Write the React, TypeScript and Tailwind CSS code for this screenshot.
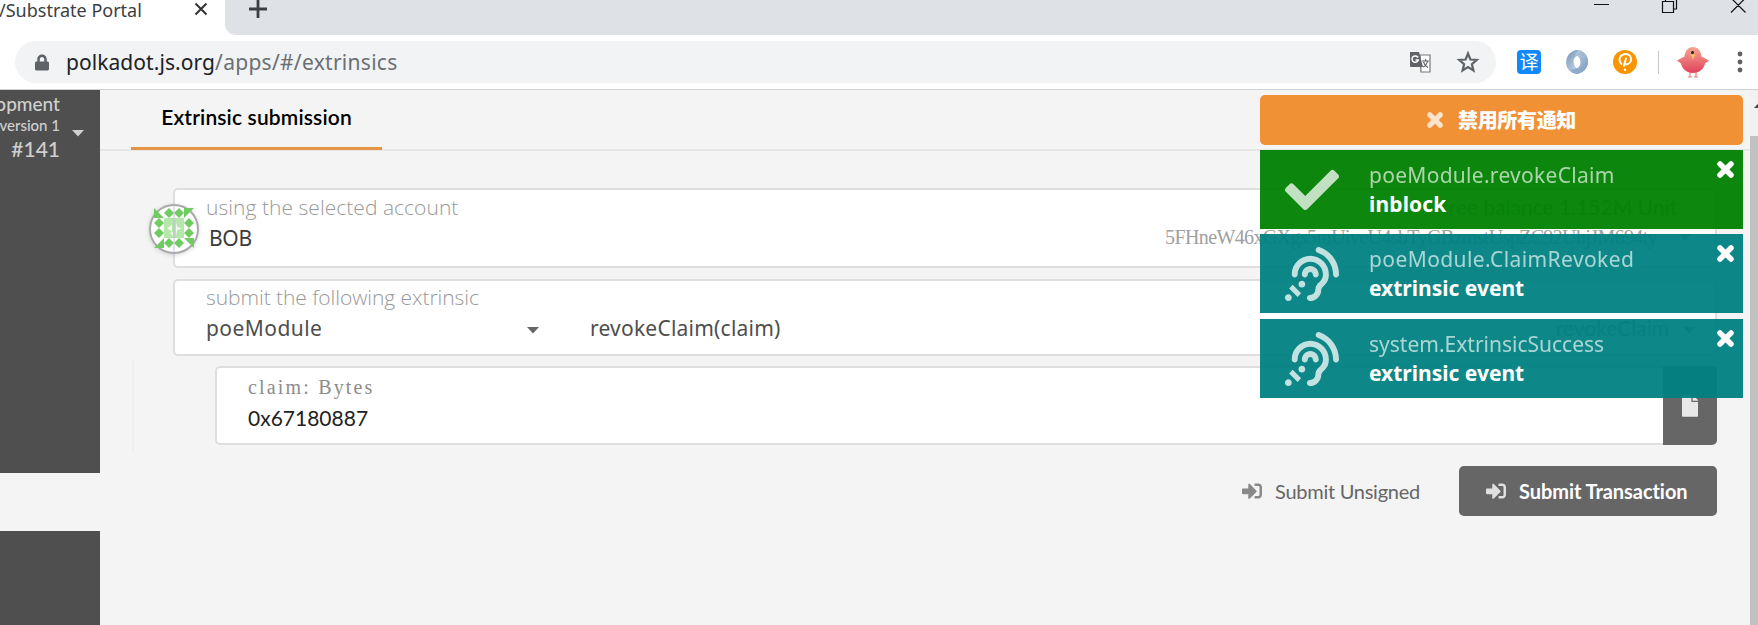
import { FaCheck, FaAssistiveListeningSystems, FaSignInAlt, FaFile, FaLock } from "react-icons/fa";

const ui = "font-['Noto_Sans','Noto_Sans_CJK_SC',sans-serif]";
const lato = "font-[Lato,sans-serif]";

function T({ w, className, children }: { w: number; className: string; children: string }) {
  return (
    <span
      className={"inline-block whitespace-pre origin-left " + className}
      ref={(el) => {
        if (el) el.style.letterSpacing = "0px";
        if (el) el.style.letterSpacing = (w - el.offsetWidth) / children.length + "px";
      }}
    >
      {children}
    </span>
  );
}

function Identicon() {
  const diamonds = [
    [19, 9], [29, 9], [19, 39], [29, 39],
    [9, 19], [9, 29], [39, 19], [39, 29],
  ];
  return (
    <svg width="52" height="52" viewBox="0 0 52 52" className="drop-shadow-sm">
      <circle cx="26" cy="26" r="24" fill="#fff" stroke="#aaa" strokeWidth="2" />
      <g transform="translate(2 1)" fill="#70cc62">
        {diamonds.map(([x, y]) => (
          <path key={x + "-" + y} d={`M${x} ${y - 5}l5 5-5 5-5-5z`} />
        ))}
        <path d="M4 4v10h10zM44 4H34v10zM4 44h10V34zM44 44V34H34z" />
        <path d="M14 14h20v20H14z" fill="#b5e6ac" />
        <path d="M26 18l1.500 5 4.500 1.500-4.500 1.500L26 31zM17 24.500l5-4v7zM20 29l3-1v4z" fill="#eefaec" />
      </g>
      <path d="M26 2v48" stroke="#c9b5d8" strokeWidth="1.500" opacity=".6" />
    </svg>
  );
}

function Browser() {
  return (
    <header className={"flex h-[90px] shrink-0 flex-col border-b border-[#cfd1d4] bg-white " + ui}>
      <div className="flex h-[35px]">
        <div className="flex w-[225px] items-start overflow-hidden text-[#3c4043]">
          <div className="-mt-[3px] w-[194px] whitespace-nowrap text-[18px] leading-[26px]"><T w={143} className="-ml-px">/Substrate Portal</T></div>
          <svg width="14" height="14" viewBox="0 0 14 14" className="mt-[2px] shrink-0" stroke="#333" strokeWidth="2"><path d="M1.500 1.500l11 11M12.500 1.500l-11 11" /></svg>
        </div>
        <div className="flex flex-1 items-start rounded-bl-[11px] bg-[#dee1e6]">
          <svg width="20" height="20" viewBox="0 0 20 20" className="-mt-[1px] ml-[23px]" stroke="#3c4043" strokeWidth="2.800"><path d="M10 1v18M1 10h18" /></svg>
          <div className="flex-1" />
          <svg width="166" height="16" viewBox="-6 0 166 16" fill="none" stroke="#111" strokeWidth="1.200">
            <path d="M-4 4.500h15M64.500 1.500h11v11h-11zM67.500 1V-2h11v11h-3M133 -2l14.500 14.500M147.500 -2L133 12.500" />
          </svg>
        </div>
      </div>
      <div className="flex h-[54px] items-center pl-[15px]">
        <div className="flex h-[42px] w-[1481px] items-center rounded-full bg-[#f1f3f4] pl-[20px]">
          <FaLock className="h-[17px] w-[14px] text-[#5f6368]" />
          <div className="ml-[17px] flex flex-1 items-center text-[21px] leading-none text-[#202124]">
            <T w={149} className="">polkadot.js.org</T>
            <T w={182} className="text-[#6b6f74]">/apps/#/extrinsics</T>
          </div>
          <svg width="22" height="22" viewBox="0 0 22 22">
            <path d="M11 4h10v17h-9z" fill="#fff" stroke="#777" strokeWidth="1.200" />
            <path d="M1 1h9l4 15H2a1 1 0 0 1-1-1z" fill="#5f6368" />
            <path d="M9 6.500A3.200 3.200 0 1 0 9.300 9H6.500" fill="none" stroke="#fff" strokeWidth="1.500" />
            <path d="M13 10h7M16.500 8v2M18.500 10c-.5 3-2 5-4.500 6M14.500 11c1 3 2.500 4.500 4.500 5.500" fill="none" stroke="#5f6368" strokeWidth="1.200" />
          </svg>
          <svg width="24" height="24" viewBox="0 0 24 24" className="ml-[25px] mr-[16px]"><path d="M12 3.500l2.400 6 6.400.5-4.900 4.200 1.500 6.300-5.400-3.400-5.400 3.400 1.500-6.300L3.200 10l6.400-.5z" fill="none" stroke="#5f6368" strokeWidth="2.200" /></svg>
        </div>
        <div className="ml-[21px] flex size-6 items-center justify-center rounded-[4px] bg-[#1189fa] text-[19px] leading-none text-white">译</div>
        <svg width="24" height="24" viewBox="0 0 24 24" className="ml-[24px]">
          <defs>
            <linearGradient id="ring" x1="0" y1="0" x2="1" y2="1"><stop offset="0" stopColor="#6f90b2" /><stop offset=".5" stopColor="#a9c0d8" /><stop offset="1" stopColor="#d5e2ee" /></linearGradient>
            <linearGradient id="ring2" x1="0" y1="0" x2="1" y2="1"><stop offset="0" stopColor="#d5e2ee" /><stop offset=".5" stopColor="#8eaccb" /><stop offset="1" stopColor="#5d83aa" /></linearGradient>
          </defs>
          <path d="M12 6C6.500 8.500 8 16.500 14 20c-2 2-4 3-6 3C-2 19-1 3 11 0c5 0 8 2 8 6-2-1.500-5-1.500-7 0z" fill="url(#ring)" />
          <path d="M12 18c5.500-2.500 4-10.500-2-14 2-2 4-3.500 6-3.500 10 4.500 10 19.500-3 23.500-5 0-8-2-8-6 2 1.500 5 1.500 7 0z" fill="url(#ring2)" opacity=".85" />
          <ellipse cx="12" cy="12" rx="3.200" ry="5.500" fill="#fff" />
        </svg>
        <svg width="24" height="24" viewBox="0 0 24 24" className="ml-[24px]">
          <circle cx="12" cy="12" r="12" fill="#fc9300" />
          <path d="M8.500 14C4 9 8 4 12.500 4c7.500 0 7.500 10.500-.5 10.500M13 8.500L10.800 16" fill="none" stroke="#fff" strokeWidth="1.900" strokeLinecap="round" />
          <circle cx="12" cy="19.800" r="1.200" fill="#fff" />
        </svg>
        <div className="ml-[21px] h-[23px] w-px bg-[#c6c9cc]" />
        <svg width="34" height="34" viewBox="0 0 34 34" className="ml-[17px]">
          <defs><linearGradient id="bird" x1="0" y1="0" x2="0" y2="1"><stop offset="0" stopColor="#f4a890" /><stop offset="1" stopColor="#e3405c" /></linearGradient></defs>
          <path d="M14 27v5m-2 0h4M20 27v5m-2 0h4" stroke="#e98074" strokeWidth="1.200" fill="none" />
          <path d="M17 2c-5 0-8 4-8.500 9.500L1 15.500l4 3C6 24 11 28 17 28s11-4 12-9.500l4-3-7.500-4C25 6 22 2 17 2z" fill="url(#bird)" />
          <path d="M14.500 9.500h5l-2.500 5z" fill="#f8c36a" /><circle cx="16.500" cy="7.500" r="1.500" fill="#222" />
        </svg>
        <svg width="6" height="22" viewBox="0 0 6 22" className="ml-[27px]" fill="#5f6368"><circle cx="3" cy="3" r="2.400" /><circle cx="3" cy="11" r="2.400" /><circle cx="3" cy="19" r="2.400" /></svg>
      </div>
    </header>
  );
}

function Caret({ className }: { className: string }) {
  return <svg width="12" height="7" viewBox="0 0 12 7" className={className} fill="currentColor"><path d="M0 0h12L6 6.500z" /></svg>;
}

function Toast({ title, status, ok }: { title: [string, number]; status: [string, number]; ok?: boolean }) {
  return (
    <div className={"relative flex h-[79px] items-center text-white " + (ok ? "bg-[#008000]/95" : "bg-[#008080]/95")}>
      <div className="flex w-[109px] pl-[25px] opacity-75">
        {ok ? <FaCheck className="size-[54px]" /> : <FaAssistiveListeningSystems className="size-[54px]" />}
      </div>
      <div className="flex flex-col items-start">
        <div className="h-[29px] text-[21px] leading-[29px] opacity-65"><T w={title[1]} className="">{title[0]}</T></div>
        <div className="h-[29px] text-[21px] font-bold leading-[29px]"><T w={status[1]} className="">{status[0]}</T></div>
      </div>
      <CloseMark className="absolute right-[9px] top-[11px] size-[17px]" />
    </div>
  );
}

function CloseMark({ className }: { className: string }) {
  return <svg viewBox="0 0 17 17" className={className} stroke="currentColor" strokeWidth="5.500" strokeLinecap="round"><path d="M3 3l11 11M14 3L3 14" /></svg>;
}

export default function App() {
  return (
    <div className={"relative flex h-[625px] w-[1758px] flex-col overflow-hidden bg-[#f4f4f4] text-[#4e4e4e] " + ui}>
      <Browser />
      <div className="flex flex-1">
        <aside className={"flex w-[100px] shrink-0 flex-col " + lato}>
          <div className="flex h-[383px] bg-[#4f4f4f] text-[#d0d0d0]">
            <div className="flex w-[60px] flex-col items-end overflow-hidden whitespace-nowrap pt-[2px] font-medium">
              <div className="text-[19px] leading-[24px]">opment</div>
              <div className="text-[15px] leading-[18px]">version 1</div>
              <div className="text-[21px] leading-[30px]"><T w={49} className="">#141</T></div>
            </div>
            <Caret className="ml-[12px] mt-[40px]" />
          </div>
          <div className="h-[58px]" />
          <div className="flex-1 bg-[#4f4f4f]" />
        </aside>
        <main className="flex w-[1650px] flex-col">
          <div className="flex h-[61px] items-end border-b-2 border-[#e6e6e6] pl-[31px]">
            <div className={"-mb-px flex h-[60px] w-[251px] justify-center border-b-[3px] border-[#e39545] pt-[11px] text-[21px] font-semibold leading-[32px] text-black " + lato}>
              <T w={191} className="">Extrinsic submission</T>
            </div>
          </div>
          <section className="ml-[73px] mt-[37px] flex h-[80px] w-[1544px] rounded-[5px] border-2 border-[#dedede] bg-white">
            <div className="-ml-[27px] mt-[13px] w-[52px]"><Identicon /></div>
            <div className="ml-[6px] flex w-[860px] flex-col items-start pt-px">
              <div className="h-[32px] text-[21px] font-light leading-[32px] text-[#999]"><T w={252} className="font-['Open_Sans']">using the selected account</T></div>
              <div className="ml-[3px] h-[31px] text-[21px] leading-[31px] text-[#3c3c3c]"><T w={43} className="">BOB</T></div>
            </div>
            <div className="flex flex-1 flex-col pr-[24px]">
              <div className={"mt-[3px] flex justify-end pr-[14px] text-[21px] leading-[28px] text-[#a0a0a0] " + lato}>free balance 1.152M Unit</div>
              <div className="flex items-center whitespace-nowrap pl-[111px] font-['Liberation_Serif',serif] text-[20px] leading-[32px] text-[#a0a0a0]">
                <T w={492} className="">5FHneW46xGXgs5mUiveU4sbTyGBzmstUspZC92UhjJM694ty</T><Caret className="ml-[22px] text-[#888]" />
              </div>
            </div>
          </section>
          <section className="ml-[73px] mt-[11px] flex h-[77px] w-[1544px] rounded-[5px] border-2 border-[#dedede] bg-white">
            <div className="flex w-[352px] flex-col items-start pl-[31px] pt-px">
              <div className="h-[30px] text-[21px] font-light leading-[30px] text-[#999]"><T w={273} className="font-['Open_Sans']">submit the following extrinsic</T></div>
              <div className="mt-px h-[30px] text-[21px] leading-[30px]"><T w={116} className="">poeModule</T></div>
            </div>
            <Caret className="mt-[46px] text-[#666]" />
            <div className="ml-[51px] mt-[32px] text-[21px] leading-[30px]"><T w={191} className="">revokeClaim(claim)</T></div>
            <div className="flex-1" />
            <div className={"mr-[14px] mt-[32px] text-[21px] leading-[29px] text-[#888] " + lato}>revokeClaim</div>
            <Caret className="mr-[20px] mt-[46px] text-[#888]" />
          </section>
          <div className="ml-[32px] mt-[3px] flex h-[93px] items-start border-l-2 border-[#efefef] pt-[7px]">
            <section className="ml-[81px] flex h-[79px] w-[1502px]">
              <div className="flex flex-1 flex-col items-start rounded-l-[5px] border-2 border-r-0 border-[#dedede] bg-white pl-[31px] pt-[4px]">
                <div className="h-[30px] font-['Liberation_Serif',serif] text-[20px] leading-[31px] text-[#8c8c8c]"><T w={127} className="">claim: Bytes</T></div>
                <div className={"h-[31px] text-[21px] leading-[31px] text-[#222] " + lato}><T w={120} className="">0x67180887</T></div>
              </div>
              <div className="flex w-[54px] items-center justify-center rounded-r-[5px] bg-[#666] text-[#e8e8e8]"><FaFile className="h-[22px] w-[16px]" /></div>
            </section>
          </div>
          <div className={"mt-[14px] flex h-[50px] pr-[33px] " + lato}>
            <div className="flex-1" />
            <div className="flex w-[217px] items-center text-[20px] text-[#666]">
              <FaSignInAlt className="size-[20px] text-[#888]" /><div className="ml-[13px]"><T w={145} className="">Submit Unsigned</T></div>
            </div>
            <button className="flex w-[258px] items-center rounded-[5px] bg-[#666] pl-[27px] text-[20px] font-bold text-white">
              <FaSignInAlt className="size-[20px] opacity-80" /><div className="ml-[13px]"><T w={169} className="">Submit Transaction</T></div>
            </button>
          </div>
        </main>
        <div className="w-[8px] overflow-hidden bg-[#f1f1f1]">
          <div className="h-[46px] pl-[4px] pt-[11px]"><Caret className="rotate-180 text-[#444]" /></div>
          <div className="h-[489px] bg-[#c1c1c1]" />
        </div>
      </div>
      <div className="absolute left-[1260px] top-[95px] flex w-[483px] flex-col">
        <button className="flex h-[50px] items-center justify-center rounded-[5px] bg-[#f19135] text-[20px] font-black text-white">
          <CloseMark className="mr-[15px] size-[16px] opacity-75" /><T w={118} className="pt-0.5">禁用所有通知</T>
        </button>
        <div className="mt-[5px] flex flex-col">
          <Toast title={["poeModule.revokeClaim", 246]} status={["inblock", 77]} ok />
          <div className="h-[5px]" />
          <Toast title={["poeModule.ClaimRevoked", 265]} status={["extrinsic event", 155]} />
          <div className="h-[6px]" />
          <Toast title={["system.ExtrinsicSuccess", 235]} status={["extrinsic event", 155]} />
        </div>
      </div>
    </div>
  );
}
